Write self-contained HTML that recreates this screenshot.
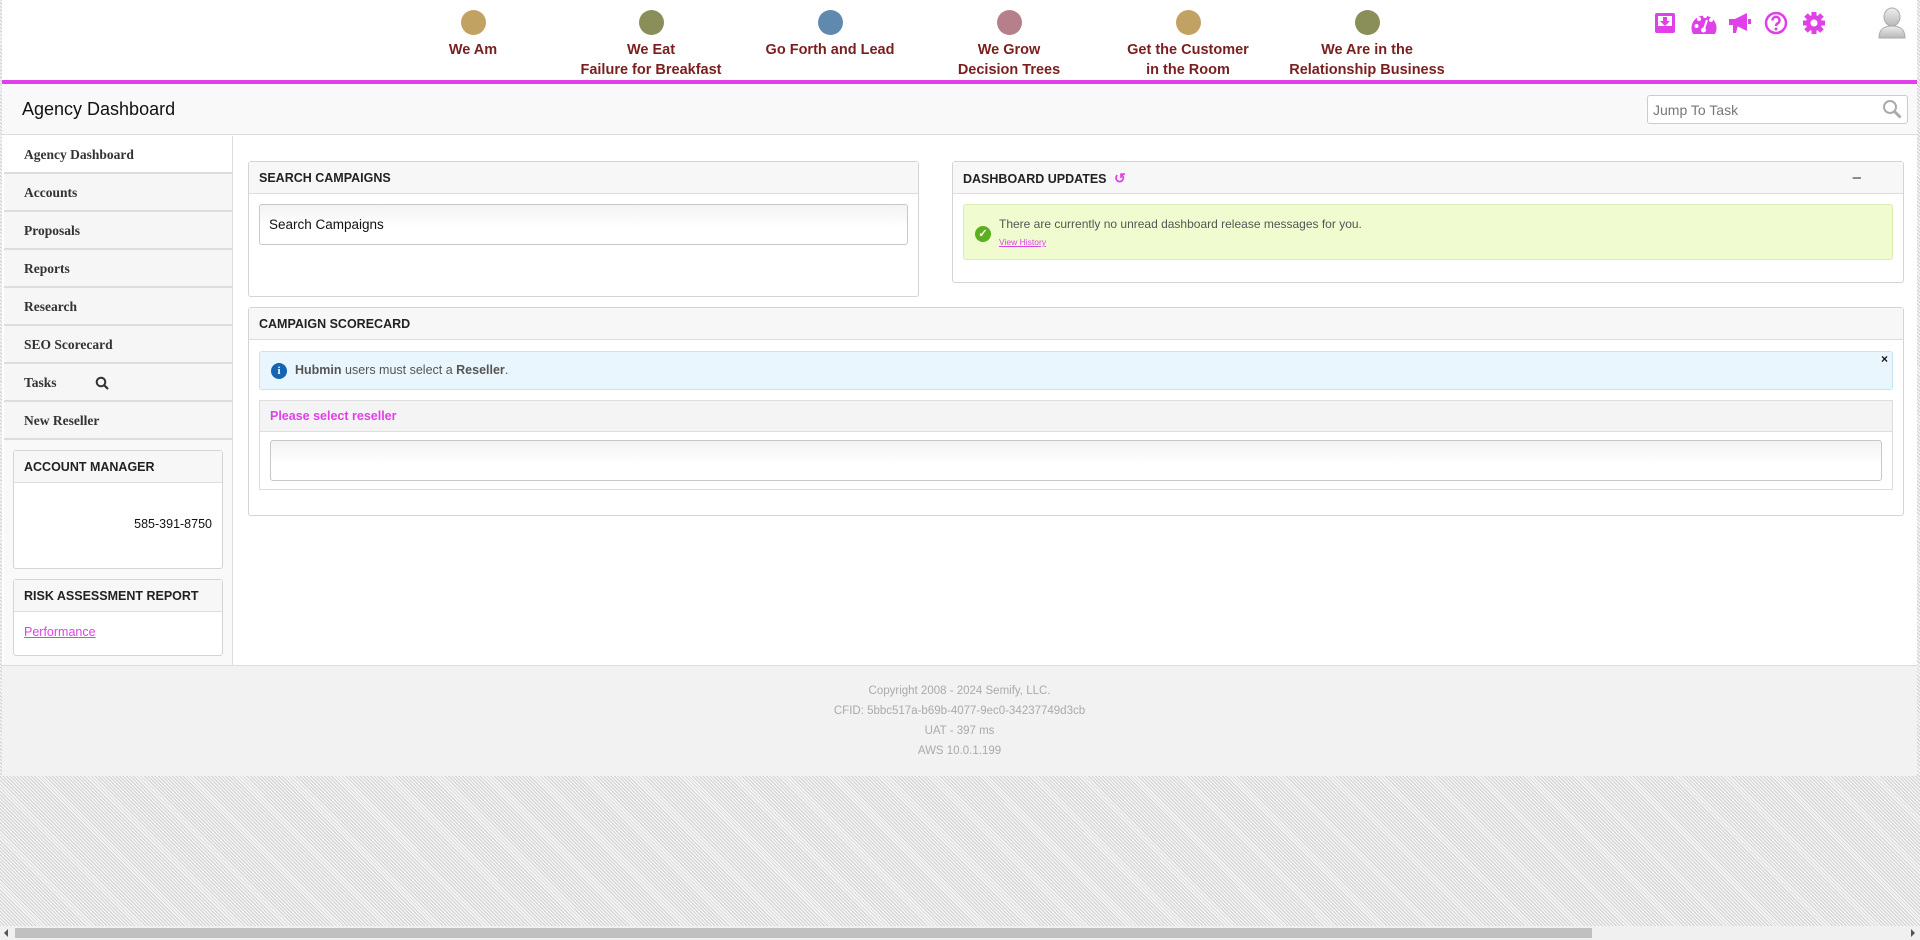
<!DOCTYPE html>
<html><head><meta charset="utf-8"><style>
*{box-sizing:border-box;margin:0;padding:0}
body{width:1920px;height:940px;overflow:hidden;font-family:"Liberation Sans",sans-serif;position:relative;
background:repeating-linear-gradient(45deg,#d2d2d2 0 1px,#f4f4f4 1px 2.5px);}
.a{position:absolute}
#page{left:2px;top:0;width:1915px;height:776px;background:#fff}
.nav{text-align:center;color:#7a1f1f;font-weight:bold;font-size:14.5px;line-height:20px}
.dot{width:25px;height:25px;border-radius:50%;margin:0 auto 5px}
.sub{left:2px;top:84px;width:1915px;height:51px;background:#f9f9f9;border-bottom:1px solid #ddd}
.side{left:4px;top:136px;width:229px;height:529px;background:#f9f9f9;border-right:1px solid #ddd}
.ni{height:38px;border-bottom:2px solid #ddd;font-family:"Liberation Serif",serif;font-weight:bold;font-size:13.5px;color:#333;padding-left:20px;line-height:38px;background:#f6f6f6}
.panel{border:1px solid #d4d4d4;border-radius:3px;background:#fff}
.ph{height:32px;background:#f7f7f7;border-bottom:1px solid #ddd;font-weight:bold;font-size:12.5px;color:#222;padding-left:10px;line-height:32px}
.inp{border:1px solid #c8c8c8;border-radius:3px;background:linear-gradient(#f3f3f3,#fff 60%)}
.foot{left:2px;top:665px;width:1915px;height:111px;background:#f2f2f2;border-top:1px solid #ddd;text-align:center;color:#aaa;font-size:11.5px;line-height:20px;padding-top:15px}
</style></head><body>
<div class="a" id="page"></div>
<div class="a nav" style="left:413px;top:10px;width:120px"><div class="dot" style="background:#c2a263"></div>We Am</div>
<div class="a nav" style="left:571px;top:10px;width:160px"><div class="dot" style="background:#8a8f5a"></div>We Eat<br>Failure for Breakfast</div>
<div class="a nav" style="left:740px;top:10px;width:180px"><div class="dot" style="background:#6089b0"></div>Go Forth and Lead</div>
<div class="a nav" style="left:929px;top:10px;width:160px"><div class="dot" style="background:#b5808a"></div>We Grow<br>Decision Trees</div>
<div class="a nav" style="left:1098px;top:10px;width:180px"><div class="dot" style="background:#c2a263"></div>Get the Customer<br>in the Room</div>
<div class="a nav" style="left:1267px;top:10px;width:200px"><div class="dot" style="background:#8a8f5a"></div>We Are in the<br>Relationship Business</div>
<div class="a" style="left:2px;top:80px;width:1915px;height:4px;background:#e040e8"></div>
<svg class="a" style="left:1654px;top:12px" width="22" height="22" viewBox="0 0 22 22"><rect x="1" y="1" width="20" height="20" rx="2" fill="#e040e8"/><rect x="4" y="4" width="14" height="10" fill="#fff"/><path d="M9 5h4v4h3l-5 5-5-5h3z" fill="#e040e8"/></svg>
<svg class="a" style="left:1690px;top:11px" width="28" height="24" viewBox="0 0 28 24"><path d="M3 23A12.5 12.5 0 1 1 25 23Z" fill="#e040e8"/><circle cx="6.5" cy="15" r="2" fill="#fff"/><circle cx="9" cy="8" r="2" fill="#fff"/><circle cx="15" cy="5" r="2" fill="#fff"/><circle cx="21" cy="9" r="2" fill="#fff"/><path d="M17 9l-3 9" stroke="#fff" stroke-width="2"/><circle cx="13.5" cy="19" r="2.5" fill="#fff"/></svg>
<svg class="a" style="left:1728px;top:12px" width="24" height="22" viewBox="0 0 24 22"><path d="M1 7h6l12-6v18L7 13H1z" fill="#e040e8"/><path d="M5 13h5l-2 8H5z" fill="#e040e8"/><rect x="20" y="7" width="3" height="5" fill="#e040e8"/></svg>
<svg class="a" style="left:1764px;top:11px" width="24" height="24" viewBox="0 0 24 24"><circle cx="12" cy="12" r="10" fill="none" stroke="#e040e8" stroke-width="2.5"/><path d="M8.5 9.5a3.5 3.5 0 1 1 5 3c-1 .6-1.5 1-1.5 2.5" fill="none" stroke="#e040e8" stroke-width="2.5"/><circle cx="12" cy="18" r="1.5" fill="#e040e8"/></svg>
<svg class="a" style="left:1802px;top:11px" width="24" height="24" viewBox="0 0 24 24"><g fill="#e040e8"><circle cx="12" cy="12" r="8"/><g stroke="#e040e8" stroke-width="5"><path d="M12 1v22M1 12h22M4 4l16 16M20 4L4 20"/></g></g><circle cx="12" cy="12" r="3.5" fill="#fff"/></svg>
<svg class="a" style="left:1877px;top:7px" width="30" height="32" viewBox="0 0 30 32"><defs><linearGradient id="g" x1="0" y1="0" x2="0" y2="1"><stop offset="0" stop-color="#eee"/><stop offset="1" stop-color="#b8b8b8"/></linearGradient></defs><ellipse cx="15" cy="10" rx="8" ry="9" fill="url(#g)" stroke="#aaa"/><path d="M2 31c0-9 5-12 13-12s13 3 13 12z" fill="url(#g)" stroke="#aaa"/></svg>
<div class="a sub"></div>
<div class="a" style="left:22px;top:99px;font-size:18px;color:#111">Agency Dashboard</div>
<div class="a" style="left:1647px;top:95px;width:261px;height:29px;border:1px solid #ccc;border-radius:3px;background:#fff;font-size:14px;color:#777;padding:6px 5px">Jump To Task</div>
<svg class="a" style="left:1882px;top:99px" width="20" height="20" viewBox="0 0 20 20"><circle cx="8" cy="8" r="6" fill="none" stroke="#aaa" stroke-width="2"/><path d="M12.5 12.5l6 6" stroke="#aaa" stroke-width="3"/></svg>
<div class="a side">
<div class="ni" style="background:#fff">Agency Dashboard</div>
<div class="ni">Accounts</div><div class="ni">Proposals</div><div class="ni">Reports</div><div class="ni">Research</div><div class="ni">SEO Scorecard</div>
<div class="ni" style="position:relative">Tasks<svg style="position:absolute;left:91px;top:12px" width="14" height="14" viewBox="0 0 14 14"><circle cx="6" cy="6" r="4.3" fill="none" stroke="#333" stroke-width="2"/><path d="M9 9l4 4" stroke="#333" stroke-width="2.2"/></svg></div>
<div class="ni">New Reseller</div>
</div>
<div class="a panel" style="left:13px;top:450px;width:210px;height:119px">
<div class="ph">ACCOUNT MANAGER</div>
<div style="text-align:right;font-size:12.5px;color:#111;padding:34px 10px 0 0">585-391-8750</div></div>
<div class="a panel" style="left:13px;top:579px;width:210px;height:77px">
<div class="ph">RISK ASSESSMENT REPORT</div>
<div style="font-size:12.5px;color:#e040e8;text-decoration:underline;padding:13px 10px">Performance</div></div>
<div class="a panel" style="left:248px;top:161px;width:671px;height:136px">
<div class="ph">SEARCH CAMPAIGNS</div>
<div class="inp" style="margin:10px 10px;height:41px;font-size:13.5px;color:#111;padding:12px 9px">Search Campaigns</div></div>
<div class="a panel" style="left:952px;top:161px;width:952px;height:122px">
<div class="ph" style="position:relative">DASHBOARD UPDATES <span style="color:#e040e8;font-size:14px;margin-left:4px">&#x21BA;</span><span style="position:absolute;right:42px;top:0;font-weight:normal;font-size:15px">&#x2013;</span></div>
<div style="margin:10px 10px;height:56px;background:#f0fbd0;border:1px solid #dcebb0;border-radius:3px;position:relative">
<div style="position:absolute;left:11px;top:21px;width:16px;height:16px;border-radius:50%;background:#5caf1e;color:#fff;font-size:11px;text-align:center;line-height:16px;font-weight:bold">&#x2713;</div>
<div style="position:absolute;left:35px;top:12px;font-size:12px;color:#555">There are currently no unread dashboard release messages for you.</div>
<div style="position:absolute;left:35px;top:32px;font-size:8.5px;color:#e040e8;text-decoration:underline">View History</div></div></div>
<div class="a panel" style="left:248px;top:307px;width:1656px;height:209px">
<div class="ph">CAMPAIGN SCORECARD</div>
<div style="margin:11px 10px 0;height:39px;background:#eaf6fd;border:1px solid #c9e3f0;border-radius:3px;position:relative;font-size:12.5px;color:#555">
<div style="position:absolute;left:11px;top:11px;width:16px;height:16px;border-radius:50%;background:#1565b5;color:#fff;font-size:11px;font-weight:bold;text-align:center;line-height:16px;font-family:'Liberation Serif',serif">i</div>
<div style="position:absolute;left:35px;top:11px"><b>Hubmin</b> users must select a <b>Reseller</b>.</div>
<div style="position:absolute;right:4px;top:0;font-size:12px;color:#111;font-weight:bold">×</div></div>
<div style="margin:10px 10px 0;height:90px;border:1px solid #ddd">
<div style="height:31px;background:#f4f4f4;border-bottom:1px solid #ddd;color:#e040e8;font-weight:bold;font-size:12.5px;padding-left:10px;line-height:31px">Please select reseller</div>
<div class="inp" style="margin:8px 10px;height:41px"></div></div></div>
<div class="a foot">Copyright 2008 - 2024 Semify, LLC.<br>CFID: 5bbc517a-b69b-4077-9ec0-34237749d3cb<br>UAT - 397 ms<br>AWS 10.0.1.199</div>
<div class="a" style="left:0;top:926px;width:1920px;height:14px;background:#f0f0f0"></div>
<div class="a" style="left:15px;top:928px;width:1577px;height:10px;background:#c0c0c0"></div>
<div class="a" style="left:4px;top:929px;width:0;height:0;border:4px solid transparent;border-right:4px solid #555;border-left:0"></div>
<div class="a" style="left:1911px;top:929px;width:0;height:0;border:4px solid transparent;border-left:4px solid #555;border-right:0"></div>
</body></html>
